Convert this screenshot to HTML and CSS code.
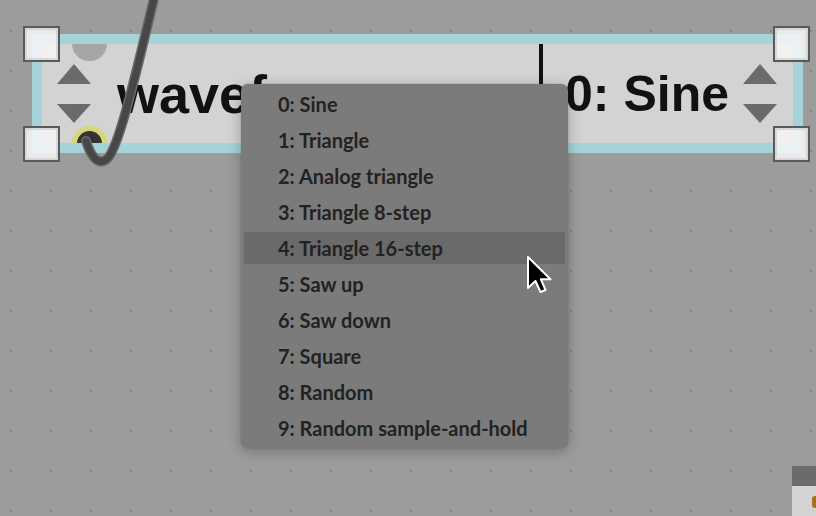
FILE: index.html
```html
<!DOCTYPE html>
<html>
<head>
<meta charset="utf-8">
<link rel="stylesheet" href="styles.css">
</head>
<body>
<div class="canvas">
  <div class="node">
    <span class="port port-top"></span>
    <span class="port port-bottom"><span class="port-core"></span></span>
    <div class="stepper stepper-left">
      <span class="tri tri-up"></span>
      <span class="tri tri-down"></span>
    </div>
    <div class="label">waveform</div>
    <div class="divider"></div>
    <div class="value">0: Sine</div>
    <div class="stepper stepper-right">
      <span class="tri tri-up"></span>
      <span class="tri tri-down"></span>
    </div>
  </div>

  <span class="handle h-tl"></span>
  <span class="handle h-bl"></span>
  <span class="handle h-tr"></span>
  <span class="handle h-br"></span>

  <svg class="cable" width="816" height="516" viewBox="0 0 816 516">
    <path d="M 86 141 C 92 160, 100 166, 108 158 C 118 146, 130 100, 156 -10" fill="none" stroke="#6a6a6a" stroke-width="10" stroke-linecap="round"/>
    <path d="M 86 141 C 92 160, 100 166, 108 158 C 118 146, 130 100, 156 -10" fill="none" stroke="#474747" stroke-width="7" stroke-linecap="round"/>
  </svg>

  <div class="corner-node">
    <div class="corner-head"></div>
    <div class="corner-body"><span class="corner-glyph"></span></div>
  </div>

  <ul class="menu">
    <li class="item">0: Sine</li>
    <li class="item">1: Triangle</li>
    <li class="item">2: Analog triangle</li>
    <li class="item">3: Triangle 8-step</li>
    <li class="item active">4: Triangle 16-step</li>
    <li class="item">5: Saw up</li>
    <li class="item">6: Saw down</li>
    <li class="item">7: Square</li>
    <li class="item">8: Random</li>
    <li class="item">9: Random sample-and-hold</li>
  </ul>

  <svg class="pointer" width="30" height="40" viewBox="0 0 30 40">
    <path d="M2 2 L2 33 L9.5 26 L14.5 37 L19.5 35 L14.8 24.2 L24.5 24.2 Z" fill="#000" stroke="#fff" stroke-width="2" stroke-linejoin="round"/>
  </svg>
</div>
</body>
</html>
```

FILE: styles.css
```css
html, body {
  margin: 0;
  padding: 0;
}

body {
  width: 816px;
  height: 516px;
  overflow: hidden;
  background-color: #9c9c9c;
  font-family: "Liberation Sans", Arial, sans-serif;
}

.canvas {
  position: relative;
  width: 816px;
  height: 516px;
  overflow: hidden;
  background-color: #9c9c9c;
  background-image: radial-gradient(circle at 1px 1px, #858585 1.2px, transparent 1.3px);
  background-size: 40px 40px;
  background-position: 10px 30px;
}

.node {
  position: absolute;
  left: 32px;
  top: 34px;
  width: 771px;
  height: 119px;
  box-sizing: border-box;
  border: 10px solid #a6d3d9;
  background: #d3d3d3;
  display: flex;
  align-items: center;
}

.port {
  position: absolute;
  left: 30px;
  width: 35px;
  height: 17px;
  overflow: hidden;
}

.port-top {
  top: 0;
  background: #a6a6a6;
  border-radius: 0 0 18px 18px;
}

.port-bottom {
  bottom: 0;
  background: #d6d67a;
  border-radius: 18px 18px 0 0;
}

.port-core {
  position: absolute;
  left: 5px;
  top: 5px;
  width: 25px;
  height: 25px;
  border-radius: 50%;
  background: #333;
}

.stepper {
  width: 34px;
  display: flex;
  flex-direction: column;
  gap: 20px;
  flex: none;
}

.stepper-left {
  margin-left: 15px;
  margin-right: 26px;
}

.stepper-right {
  margin-left: 14px;
  margin-right: 16px;
}

.tri {
  width: 0;
  height: 0;
  border-left: 17px solid transparent;
  border-right: 17px solid transparent;
}

.tri-up {
  border-bottom: 20px solid #6b6b6b;
}

.tri-down {
  border-top: 19px solid #6b6b6b;
}

.label {
  flex: 1;
  min-width: 0;
  overflow: hidden;
  white-space: nowrap;
  font-size: 54px;
  font-weight: 700;
  line-height: 54px;
  color: #111;
}

.divider {
  align-self: stretch;
  width: 4px;
  background: #111;
  flex: none;
}

.value {
  flex: none;
  padding-left: 22px;
  white-space: nowrap;
  font-size: 50px;
  font-weight: 700;
  line-height: 54px;
  color: #111;
}

.handle {
  position: absolute;
  width: 33px;
  height: 32px;
  border: 2px solid #5a5a5a;
  background: rgba(245, 245, 245, 0.88);
  box-shadow: inset 0 0 0 2px rgba(200, 200, 200, 0.6);
}

.h-tl { left: 23px; top: 26px; }
.h-bl { left: 23px; top: 126px; }
.h-tr { left: 773px; top: 26px; }
.h-br { left: 773px; top: 126px; }

.cable {
  position: absolute;
  left: 0;
  top: 0;
}

.corner-node {
  position: absolute;
  left: 792px;
  top: 466px;
  width: 40px;
  height: 60px;
  display: flex;
  flex-direction: column;
}

.corner-head {
  height: 20px;
  background: #6b6b6b;
}

.corner-body {
  flex: 1;
  background: #d3d3d3;
  position: relative;
}

.corner-glyph {
  position: absolute;
  left: 20px;
  top: 10px;
  width: 6px;
  height: 12px;
  background: #a7701f;
  border-radius: 3px 0 0 3px;
}

.menu {
  position: absolute;
  left: 241px;
  top: 84px;
  width: 327px;
  height: 364px;
  box-sizing: border-box;
  margin: 0;
  padding: 4px 3px;
  list-style: none;
  display: flex;
  flex-direction: column;
  gap: 4px;
  background: #7b7b7b;
  border-radius: 7px;
  box-shadow: 0 3px 14px rgba(0, 0, 0, 0.28), 0 0 0 1px rgba(0, 0, 0, 0.05);
  font-family: Lato, "Liberation Sans", sans-serif;
  font-weight: 700;
  font-size: 20px;
  color: #222;
}

.item {
  height: 32px;
  flex: none;
  padding-left: 34px;
  line-height: 32px;
  white-space: nowrap;
}

.item.active {
  background: #6a6a6a;
}

.pointer {
  position: absolute;
  left: 526px;
  top: 255px;
}
```
